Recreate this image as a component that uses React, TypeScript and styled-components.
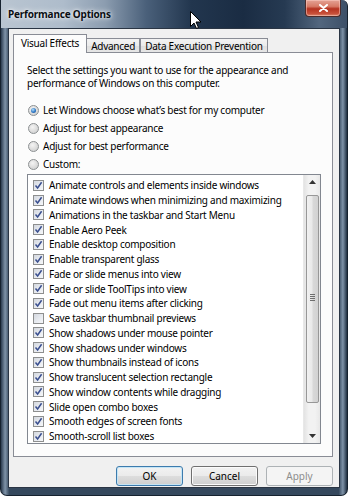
import React from "react";
import styled, { createGlobalStyle } from "styled-components";

const Global = createGlobalStyle`
  html, body { margin: 0; padding: 0; background: #ffffff; }
  body { font-family: "Segoe UI", "Noto Sans", "Open Sans", sans-serif; }
`;

const FONT = `"Segoe UI", "Noto Sans", "Open Sans", sans-serif`;

const Window = styled.div`
  position: relative;
  width: 348px;
  height: 496px;
  box-sizing: border-box;
  display: flex;
  flex-direction: column;
  border-radius: 0 6px 7px 7px;
  border: 1px solid #16222f;
  border-top: none;
  background:
    linear-gradient(90deg, #2c3c50 0%, #7f93a8 1.2%, #35485d 2.4%, #35485d 97.6%, #7f93a8 98.8%, #203042 100%);
  overflow: hidden;
`;

const TitleBar = styled.div`
  height: 28px;
  flex: none;
  display: flex;
  align-items: flex-start;
  justify-content: space-between;
  padding: 0 6px 0 7px;
  background: linear-gradient(
    90deg,
    #b9c5d1 0%,
    #aebccb 18%,
    #8c9db0 30%,
    #4a607a 42%,
    #22364e 55%,
    #1a2c43 70%,
    #263a52 82%,
    #52667e 92%,
    #3d5068 100%
  );
`;

const Title = styled.div`
  font-family: ${FONT};
  font-weight: 700;
  font-size: 10px;
  line-height: 14px;
  margin-top: 7px;
  color: #0b0f14;
  text-shadow: 0 0 6px rgba(255, 255, 255, 0.9), 0 0 3px rgba(255, 255, 255, 0.8);
  letter-spacing: -0.2px;
`;

const CloseButton = styled.div`
  width: 36px;
  height: 17px;
  box-sizing: border-box;
  border: 1px solid #4b2b2b;
  border-top: none;
  border-radius: 0 0 4px 4px;
  background: linear-gradient(180deg, #e4a395 0%, #d77a66 40%, #b53320 55%, #c8503a 85%, #d9876e 100%);
  display: flex;
  align-items: center;
  justify-content: center;
  box-shadow: inset 0 0 0 1px rgba(255, 210, 200, 0.5);
`;

const Client = styled.div`
  flex: 1;
  margin: 0 7px 7px 7px;
  border: 1px solid #2a3544;
  background: #f0f0f0;
  display: flex;
  flex-direction: column;
  padding: 5px 6px 0 4px;
  box-sizing: border-box;
`;

const TabRow = styled.div`
  display: flex;
  align-items: flex-end;
  height: 19px;
  margin-bottom: -1px;
  position: relative;
  z-index: 1;
`;

const Tab = styled.div<{ $active?: boolean }>`
  font-family: ${FONT};
  font-size: 10px;
  letter-spacing: -0.25px;
  color: #000;
  box-sizing: border-box;
  border: 1px solid #898c95;
  border-bottom: ${(p) => (p.$active ? "none" : "1px solid #898c95")};
  border-left: ${(p) => (p.$active ? "1px solid #898c95" : "none")};
  height: ${(p) => (p.$active ? "19px" : "15px")};
  padding: ${(p) => (p.$active ? "0 7px" : "0 4px")};
  display: flex;
  align-items: center;
  padding-bottom: ${(p) => (p.$active ? "2px" : "0")};
  background: ${(p) =>
    p.$active ? "#fcfcfc" : "linear-gradient(180deg, #f3f3f3 0%, #ebebeb 50%, #dedede 51%, #e6e6e6 100%)"};
  &:nth-child(3) { border-left: 1px solid #898c95; }
`;

const Panel = styled.div`
  height: 405px;
  box-sizing: border-box;
  border: 1px solid #898c95;
  background: #fcfcfc;
  padding: 11px 11px 0 13px;
  display: flex;
  flex-direction: column;
`;

const Intro = styled.p`
  margin: 0;
  font-family: ${FONT};
  font-size: 10px;
  letter-spacing: -0.25px;
  line-height: 13px;
  color: #000;
`;

const RadioGroup = styled.div`
  display: flex;
  flex-direction: column;
  margin-top: 11px;
`;

const RadioRow = styled.label`
  display: flex;
  align-items: center;
  height: 18px;
  gap: 4px;
  font-family: ${FONT};
  font-size: 10px;
  letter-spacing: -0.25px;
  color: #000;
`;

const RadioDot = styled.span<{ $on?: boolean }>`
  width: 11px;
  height: 11px;
  box-sizing: border-box;
  border-radius: 50%;
  border: 1px solid #8c9092;
  margin-left: 1px;
  display: flex;
  align-items: center;
  justify-content: center;
  background: radial-gradient(circle at 40% 35%, #f4f4f4 0%, #dcdcdc 55%, #c8cacc 100%);
  &::after {
    content: "";
    display: ${(p) => (p.$on ? "block" : "none")};
    width: 5px;
    height: 5px;
    border-radius: 50%;
    background: radial-gradient(circle at 40% 35%, #b6e0fa 0%, #2f78c6 55%, #1b4f8f 100%);
  }
`;

const ListBox = styled.div`
  margin-top: 1px;
  height: 270px;
  box-sizing: border-box;
  border: 1px solid #828790;
  background: #ffffff;
  display: flex;
  position: relative;
`;

const Items = styled.ul`
  list-style: none;
  margin: 0;
  padding: 3px 0 0 5px;
  flex: 1;
  overflow: hidden;
`;

const Item = styled.li`
  height: 14.75px;
  display: flex;
  align-items: center;
  gap: 5px;
  font-family: ${FONT};
  font-size: 10px;
  letter-spacing: -0.25px;
  color: #000;
  white-space: nowrap;
`;

const Check = styled.span`
  width: 11px;
  height: 11px;
  flex: none;
  box-sizing: border-box;
  border: 1px solid #8e8f8f;
  background: linear-gradient(135deg, #d4d8df 0%, #e9ecf1 60%, #f6f7f9 100%);
  display: flex;
  align-items: center;
  justify-content: center;
`;

const ScrollBar = styled.div`
  width: 16px;
  flex: none;
  background: linear-gradient(90deg, #e3e3e3 0%, #f2f2f2 30%, #f2f2f2 70%, #e8e8e8 100%);
  border-left: 1px solid #e8e8e8;
  display: flex;
  flex-direction: column;
  align-items: center;
`;

const Arrow = styled.div`
  height: 14px;
  width: 100%;
  display: flex;
  align-items: center;
  justify-content: center;
  flex: none;
`;

const Thumb = styled.div`
  width: 13px;
  height: 208px;
  margin-top: 6px;
  box-sizing: border-box;
  border: 1px solid #979797;
  border-radius: 2px;
  background: linear-gradient(90deg, #f1f1f1 0%, #e9e9e9 45%, #d8d8d8 55%, #d2d2d2 100%);
  display: flex;
  align-items: center;
  justify-content: center;
  margin-bottom: auto;
  padding-bottom: 4px;
`;

const Grip = styled.div`
  display: flex;
  flex-direction: column;
  gap: 1px;
  & > span {
    display: block;
    width: 5px;
    height: 1px;
    background: #6e6e6e;
  }
`;

const ButtonRow = styled.div`
  display: flex;
  justify-content: flex-end;
  gap: 8px;
  margin-top: 9px;
`;

const Button = styled.button<{ $default?: boolean }>`
  width: 67px;
  height: 20px;
  box-sizing: border-box;
  border-radius: 3px;
  font-family: ${FONT};
  font-size: 10px;
  padding: 0;
  color: ${(p) => (p.disabled ? "#8d8d8d" : "#000")};
  border: 1px solid ${(p) => (p.$default ? "#3d7bad" : p.disabled ? "#adb2b5" : "#707070")};
  background: ${(p) =>
    p.disabled
      ? "#f4f4f4"
      : "linear-gradient(180deg, #f2f2f2 0%, #ebebeb 48%, #dddddd 52%, #cfcfcf 100%)"};
  box-shadow: ${(p) => (p.$default ? "inset 0 0 0 1px #c4e5f6" : p.disabled ? "none" : "inset 0 0 0 1px #fbfbfb")};
`;

const Cursor = styled.svg`
  position: absolute;
  left: 189px;
  top: 11px;
`;

const items: [string, boolean][] = [
  ["Animate controls and elements inside windows", true],
  ["Animate windows when minimizing and maximizing", true],
  ["Animations in the taskbar and Start Menu", true],
  ["Enable Aero Peek", true],
  ["Enable desktop composition", true],
  ["Enable transparent glass", true],
  ["Fade or slide menus into view", true],
  ["Fade or slide ToolTips into view", true],
  ["Fade out menu items after clicking", true],
  ["Save taskbar thumbnail previews", false],
  ["Show shadows under mouse pointer", true],
  ["Show shadows under windows", true],
  ["Show thumbnails instead of icons", true],
  ["Show translucent selection rectangle", true],
  ["Show window contents while dragging", true],
  ["Slide open combo boxes", true],
  ["Smooth edges of screen fonts", true],
  ["Smooth-scroll list boxes", true],
];

const radios = [
  "Let Windows choose what\u2019s best for my computer",
  "Adjust for best appearance",
  "Adjust for best performance",
  "Custom:",
];

export default function App() {
  return (
    <>
      <Global />
      <Window>
        <TitleBar>
          <Title>Performance Options</Title>
          <CloseButton>
            <svg width="9" height="8" viewBox="0 0 9 8">
              <path d="M1 1 L8 7 M8 1 L1 7" stroke="#ffffff" strokeWidth="2" strokeLinecap="round" />
            </svg>
          </CloseButton>
        </TitleBar>
        <Client>
          <TabRow>
            <Tab $active>Visual Effects</Tab>
            <Tab>Advanced</Tab>
            <Tab>Data Execution Prevention</Tab>
          </TabRow>
          <Panel>
            <Intro>
              Select the settings you want to use for the appearance and
              <br />
              performance of Windows on this computer.
            </Intro>
            <RadioGroup>
              {radios.map((r, i) => (
                <RadioRow key={r}>
                  <RadioDot $on={i === 0} />
                  {r}
                </RadioRow>
              ))}
            </RadioGroup>
            <ListBox>
              <Items>
                {items.map(([label, on]) => (
                  <Item key={label}>
                    <Check>
                      {on && (
                        <svg width="9" height="9" viewBox="0 0 9 9">
                          <path d="M1.5 4.5 L3.6 7 L7.6 1.2" fill="none" stroke="#3a4f8f" strokeWidth="1.5" />
                        </svg>
                      )}
                    </Check>
                    {label}
                  </Item>
                ))}
              </Items>
              <ScrollBar>
                <Arrow>
                  <svg width="7" height="4" viewBox="0 0 7 4">
                    <path d="M0 4 L3.5 0 L7 4 Z" fill="#333" />
                  </svg>
                </Arrow>
                <Thumb>
                  <Grip>
                    <span />
                    <span />
                    <span />
                    <span />
                  </Grip>
                </Thumb>
                <Arrow>
                  <svg width="7" height="4" viewBox="0 0 7 4">
                    <path d="M0 0 L7 0 L3.5 4 Z" fill="#333" />
                  </svg>
                </Arrow>
              </ScrollBar>
            </ListBox>
          </Panel>
          <ButtonRow>
            <Button $default>OK</Button>
            <Button>Cancel</Button>
            <Button disabled>Apply</Button>
          </ButtonRow>
        </Client>
        <Cursor width="12" height="19" viewBox="0 0 12 19">
          <path d="M0.5 0.5 L0.5 15.5 L4 12 L6.5 17.5 L8.5 16.5 L6 11 L11 11 Z" fill="#ffffff" stroke="#000000" strokeWidth="1" />
        </Cursor>
      </Window>
    </>
  );
}
